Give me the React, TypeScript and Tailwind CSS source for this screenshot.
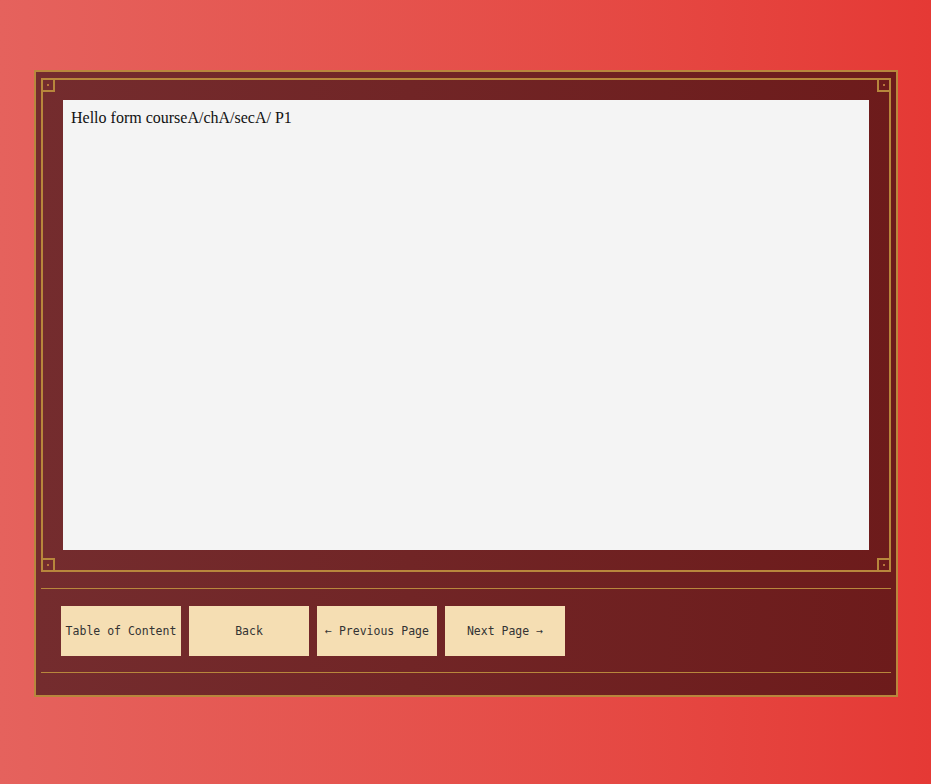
import React from "react";

function Corner({ pos }: { pos: string }) {
  return (
    <div
      className={`absolute ${pos} w-[14px] h-[14px] border-2 border-[#b8873c] flex items-center justify-center`}
    >
      <div className="w-[2px] h-[2px] bg-[#b8753c]" />
    </div>
  );
}

const btn =
  "w-[120px] h-[50px] pt-[2px] bg-[#f5deb3] text-[#333] text-[11.5px] flex items-center justify-center whitespace-nowrap";

export default function App() {
  return (
    <div className="w-[931px] h-[784px] bg-gradient-to-r from-[#e5625d] to-[#e53935] pt-[70px] pl-[34px]">
      <div className="w-[864px] h-[627px] border-2 border-[#b8873c] bg-gradient-to-r from-[#742c2e] to-[#6d1b1b] px-[5px] pt-[6px]">
        <div className="relative h-[494px] border-2 border-[#b8873c] p-[20px]">
          <Corner pos="-top-[2px] -left-[2px]" />
          <Corner pos="-top-[2px] -right-[2px]" />
          <Corner pos="-bottom-[2px] -left-[2px]" />
          <Corner pos="-bottom-[2px] -right-[2px]" />
          <div
            className="h-[450px] bg-[#f4f4f4] px-[8px] pt-[6px] text-[16px] text-[#111]"
            style={{ fontFamily: '"Liberation Serif", serif' }}
          >
            Hello form courseA/chA/secA/ P1
          </div>
        </div>
        <div className="mt-[16px] border-t border-[#b8873c]" />
        <div
          className="flex gap-[8px] px-[20px] pt-[17px] pb-[16px]"
          style={{ fontFamily: '"DejaVu Sans Mono", monospace' }}
        >
          <button className={btn}>Table of Content</button>
          <button className={btn}>Back</button>
          <button className={btn}>← Previous Page</button>
          <button className={btn}>Next Page →</button>
        </div>
        <div className="border-t border-[#b8873c]" />
      </div>
    </div>
  );
}
